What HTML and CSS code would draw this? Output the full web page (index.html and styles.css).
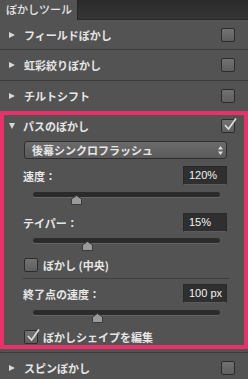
FILE: index.html
```html
<!DOCTYPE html>
<html lang="ja">
<head>
<meta charset="utf-8">
<link rel="stylesheet" href="styles.css">
</head>
<body>
<div class="panel">
  <div class="tabs">
    <div class="tab">ぼかしツール</div>
    <div class="tab-fill"></div>
  </div>
  <div class="row row-first"><span class="tri-right"></span><span class="label">フィールドぼかし</span><span class="cb"></span></div>
  <div class="row"><span class="tri-right"></span><span class="label">虹彩絞りぼかし</span><span class="cb"></span></div>
  <div class="row row-last"><span class="tri-right"></span><span class="label">チルトシフト</span><span class="cb"></span></div>
  <section class="active">
    <div class="title-row">
      <span class="tri-down"></span><span class="label">パスのぼかし</span>
      <span class="cb checked"><svg class="check" width="16" height="16" viewBox="0 0 16 16"><polyline points="3,8 6.5,12 14,1.5" fill="none" stroke="#dcdcdc" stroke-width="1.7" stroke-linejoin="round"/></svg></span>
    </div>
    <div class="select">
      <span>後幕シンクロフラッシュ</span>
      <svg width="5" height="9" viewBox="0 0 5 9"><polygon points="2.5,0 5,3.5 0,3.5" fill="#e0e0e0"/><polygon points="0,5.5 5,5.5 2.5,9" fill="#e0e0e0"/></svg>
    </div>
    <div class="field f-first"><span>速度：</span><span class="input">120%</span></div>
    <div class="slider s-a"><div class="track"></div><svg class="thumb" style="left:38px" width="11" height="10" viewBox="0 0 11 10"><polygon points="5.5,0.5 10.5,4 10.5,9.5 0.5,9.5 0.5,4" fill="#9a9a9a" stroke="#3a3a3a"/></svg></div>
    <div class="field f-mid"><span>テイパー：</span><span class="input">15%</span></div>
    <div class="slider s-b"><div class="track"></div><svg class="thumb" style="left:49px" width="11" height="10" viewBox="0 0 11 10"><polygon points="5.5,0.5 10.5,4 10.5,9.5 0.5,9.5 0.5,4" fill="#9a9a9a" stroke="#3a3a3a"/></svg></div>
    <div class="check-row"><span class="cb"></span><span>ぼかし (中央)</span></div>
    <div class="divider"></div>
    <div class="field f-last"><span>終了点の速度：</span><span class="input">100 px</span></div>
    <div class="slider s-a"><div class="track"></div><svg class="thumb" style="left:59px" width="11" height="10" viewBox="0 0 11 10"><polygon points="5.5,0.5 10.5,4 10.5,9.5 0.5,9.5 0.5,4" fill="#9a9a9a" stroke="#3a3a3a"/></svg></div>
    <div class="check-row"><span class="cb checked"><svg class="check" width="16" height="16" viewBox="0 0 16 16"><polyline points="3,8 6.5,12 14,1.5" fill="none" stroke="#dcdcdc" stroke-width="1.7" stroke-linejoin="round"/></svg></span><span>ぼかしシェイプを編集</span></div>
  </section>
  <div class="after-sep"></div>
  <div class="row"><span class="tri-right"></span><span class="label">スピンぼかし</span><span class="cb"></span></div>
</div>
</body>
</html>
```

FILE: styles.css
```css
html, body {
  margin: 0;
  background: #535353;
}
body {
  font-family: "Noto Sans CJK JP", sans-serif;
  font-size: 11px;
  color: #e6e6e6;
  overflow: hidden;
}
.panel {
  width: 248px;
}
.tabs {
  display: flex;
  height: 20px;
}
.tab {
  width: 78px;
  box-sizing: border-box;
  padding-left: 6px;
  line-height: 19px;
  font-weight: 500;
  background: #535353;
  border-right: 1px solid #262626;
}
.tab-fill {
  flex: 1;
  background: linear-gradient(#2a2a2a, #363636);
  border-bottom: 1px solid #2a2a2a;
}
.row {
  display: flex;
  align-items: center;
  box-sizing: border-box;
  height: 31px;
  padding: 0 13px 0 9px;
  border-bottom: 1px solid #3b3b3b;
}
.row-first {
  height: 30px;
}
.row-last {
  height: 30px;
  border-bottom: none;
}
.tri-right {
  width: 0;
  height: 0;
  border-top: 3.5px solid transparent;
  border-bottom: 3.5px solid transparent;
  border-left: 6px solid #d8d8d8;
}
.tri-down {
  width: 0;
  height: 0;
  border-left: 3.5px solid transparent;
  border-right: 3.5px solid transparent;
  border-top: 6px solid #d8d8d8;
}
.label {
  flex: 1;
  margin-left: 9px;
  font-weight: 700;
}
.title-row .label {
  margin-left: 8px;
}
.cb {
  position: relative;
  width: 14px;
  height: 14px;
  box-sizing: border-box;
  border: 1px solid #2c2c2c;
  border-radius: 2px;
  background: linear-gradient(#727272, #5f5f5f);
  flex: none;
}
.check {
  position: absolute;
  left: 0;
  top: -3px;
}
.active {
  border: 4px solid #e8306b;
  padding-bottom: 1px;
}
.title-row {
  display: flex;
  align-items: center;
  height: 21px;
  padding: 0 9px 0 5px;
}
.select {
  display: flex;
  align-items: center;
  justify-content: space-between;
  height: 18px;
  box-sizing: border-box;
  margin: 5px 17px 0 20px;
  padding: 0 3px 0 7px;
  border: 1px solid #2e2e2e;
  border-radius: 3px;
  background: linear-gradient(#6b6b6b, #5a5a5a);
  font-weight: 700;
}
.field {
  display: flex;
  align-items: center;
  justify-content: space-between;
  height: 19px;
  margin: 7px 17px 0 19px;
  font-weight: 700;
}
.f-mid {
  margin-top: 7px;
}
.f-last {
  margin-top: 5px;
}
.input {
  width: 44px;
  height: 19px;
  box-sizing: border-box;
  padding-left: 5px;
  background: #2f2f2f;
  border: 1px solid #292929;
  border-bottom-color: #5c5c5c;
  font-family: "Liberation Sans", sans-serif;
  font-size: 11px;
  font-weight: 400;
  line-height: 17px;
  color: #f2f2f2;
}
.slider {
  position: relative;
  width: 187px;
  height: 14px;
  margin: 7px 0 0 29px;
}
.s-b {
  margin-top: 6px;
}
.track {
  height: 5px;
  border-radius: 3px;
  background: #2b2b2b;
  box-shadow: 0 1px 0 #666666;
}
.thumb {
  position: absolute;
  top: 3px;
}
.check-row {
  display: flex;
  align-items: center;
  gap: 5px;
  height: 14px;
  margin: 6px 0 0 20px;
  font-weight: 700;
}
.divider {
  height: 1px;
  margin: 6px 15px 0 19px;
  background: #3e3e3e;
}
.after-sep {
  height: 1px;
  margin-top: 3px;
  background: #3b3b3b;
}
```
